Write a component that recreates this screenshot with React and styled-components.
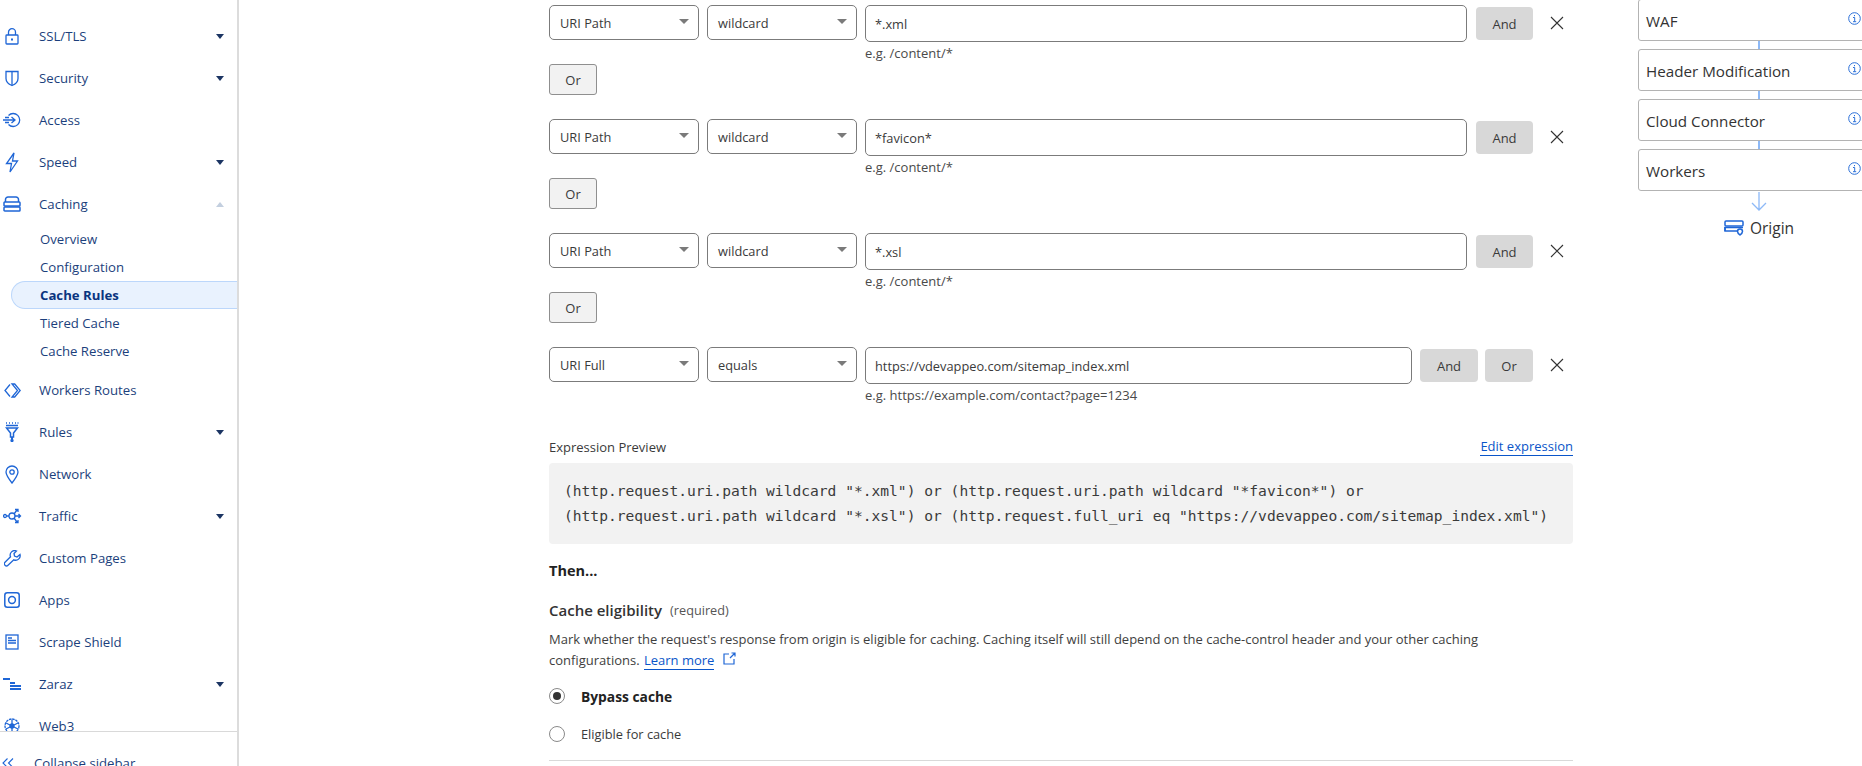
import React from "react";
import styled, { createGlobalStyle } from "styled-components";

const Global = createGlobalStyle`
  html, body { margin: 0; padding: 0; background: #fff; overflow: hidden; }
  body { font-family: "Open Sans", "Noto Sans", "Liberation Sans", sans-serif; color: #313131; }
  * { box-sizing: border-box; }
`;

const Page = styled.div`
  display: flex;
  width: 1862px;
  height: 766px;
  overflow: hidden;
`;

const Sidebar = styled.aside`
  flex: 0 0 239px;
  height: 766px;
  display: flex;
  flex-direction: column;
  border-right: 2px solid #dcdcdc;
  overflow: hidden;
`;

const NavList = styled.nav`
  height: 732px;
  flex: 0 0 732px;
  padding-top: 15px;
  overflow: hidden;
  border-bottom: 1px solid #d9d9d9;
`;

const NavRow = styled.div`
  display: flex;
  align-items: center;
  height: 42px;
  padding: 0 13px 0 2px;
  font-size: 13.2px;
  color: #1c3f7c;
`;

const NavIcon = styled.span`
  flex: 0 0 20px;
  margin-right: 17px;
  display: flex;
  align-items: center;
  justify-content: center;
  color: #1f66d6;
`;

const NavLabel = styled.span`
  flex: 1;
`;

const Caret = styled.span`
  width: 0;
  height: 0;
  border-left: 4.5px solid transparent;
  border-right: 4.5px solid transparent;
  border-top: ${(p) => (p.$up ? "0" : "5px solid #1c3563")};
  border-bottom: ${(p) => (p.$up ? "5px solid #c3cfdf" : "0")};
`;

const SubList = styled.div`
  display: flex;
  flex-direction: column;
  margin-bottom: 4px;
`;

const SubRow = styled.div`
  height: 28px;
  margin-left: ${(p) => (p.$active ? "11px" : "0")};
  padding-left: ${(p) => (p.$active ? "28px" : "40px")};
  display: flex;
  align-items: center;
  font-size: 13.2px;
  font-weight: ${(p) => (p.$active ? 700 : 400)};
  color: ${(p) => (p.$active ? "#0a3580" : "#1c3f7c")};
  background: ${(p) => (p.$active ? "#e9f2fe" : "transparent")};
  border: ${(p) => (p.$active ? "1px solid #bcd7fb" : "0")};
  border-right: 0;
  border-radius: 14px 0 0 14px;
`;

const Collapse = styled.div`
  display: flex;
  align-items: center;
  gap: 20px;
  padding: 22px 0 0 2px;
  font-size: 13.2px;
  color: #1c3f7c;
  white-space: nowrap;
`;

const Main = styled.main`
  flex: 0 0 1024px;
  margin-left: 310px;
  padding-top: 5px;
`;

const RuleRow = styled.div`
  display: flex;
  align-items: flex-start;
`;

const SelectBox = styled.div`
  flex: 0 0 150px;
  height: 35px;
  margin-right: 8px;
  padding: 0 9px 0 10px;
  display: flex;
  align-items: center;
  justify-content: space-between;
  border: 1px solid #7b7b7b;
  border-radius: 5px;
  font-size: 12.8px;
  color: #3a3a3a;
`;

const SelectCaret = styled.span`
  width: 0;
  height: 0;
  margin-bottom: 2px;
  border-left: 5px solid transparent;
  border-right: 5px solid transparent;
  border-top: 5px solid #7a7a7a;
`;

const ValueColumn = styled.div`
  flex: 1;
  min-width: 0;
`;

const ValueField = styled.div`
  height: 37px;
  padding: 0 9px;
  display: flex;
  align-items: center;
  border: 1px solid #7b7b7b;
  border-radius: 5px;
  font-size: 12.8px;
  color: #3a3a3a;
`;

const Hint = styled.div`
  margin-top: 3px;
  height: 17px;
  line-height: 17px;
  font-size: 13px;
  color: #4a4a4a;
`;

const FlatButton = styled.div`
  height: 33px;
  margin: 2px 0 0 ${(p) => p.$gap}px;
  flex: 0 0 ${(p) => p.$width}px;
  display: flex;
  align-items: center;
  justify-content: center;
  background: #d8d8d8;
  border-radius: 4px;
  font-size: 13px;
  color: #3a3a3a;
`;

const RemoveIcon = styled.span`
  flex: 0 0 40px;
  height: 35px;
  display: flex;
  align-items: center;
  justify-content: flex-end;
  padding-right: 9px;
  color: #333;
`;

const OrButton = styled.div`
  width: 48px;
  height: 31px;
  margin: 2px 0 24px;
  display: flex;
  align-items: center;
  justify-content: center;
  background: #f2f2f2;
  border: 1px solid #8f8f8f;
  border-radius: 3px;
  font-size: 13px;
  color: #3a3a3a;
`;

const PreviewHead = styled.div`
  margin: 33px 0 6px;
  display: flex;
  justify-content: space-between;
  align-items: center;
  height: 20px;
`;

const PreviewLabel = styled.span`
  font-size: 13px;
  color: #3a3a3a;
`;

const EditLink = styled.span`
  font-size: 13px;
  line-height: 17px;
  color: #0a55c9;
  border-bottom: 1px solid #0a55c9;
`;

const CodeBox = styled.pre`
  margin: 0;
  height: 81px;
  padding: 15px;
  background: #f2f2f2;
  border-radius: 4px;
  font-family: "DejaVu Sans Mono", "Liberation Mono", monospace;
  font-size: 14.6px;
  line-height: 25px;
  color: #3a3a3a;
`;

const ThenTitle = styled.div`
  margin-top: 16px;
  height: 22px;
  line-height: 22px;
  font-size: 14.5px;
  font-weight: 700;
  color: #222;
`;

const FieldTitle = styled.div`
  margin-top: 18px;
  height: 20px;
  display: flex;
  align-items: center;
  gap: 8px;
  font-size: 15px;
  font-weight: 600;
  color: #333;
`;

const Required = styled.span`
  font-size: 12.7px;
  font-weight: 400;
  color: #555;
`;

const Description = styled.p`
  margin: 9px 0 0;
  font-size: 13px;
  line-height: 21px;
  color: #3e3e3e;
`;

const LearnLink = styled.span`
  color: #0a55c9;
  border-bottom: 1px solid #0a55c9;
  margin: 0 5px 0 1px;
`;

const RadioRow = styled.div`
  display: flex;
  align-items: center;
  height: 38px;
  gap: 16px;
  font-size: ${(p) => (p.$checked ? "13.8px" : "12.8px")};
  font-weight: ${(p) => (p.$checked ? 700 : 400)};
  color: ${(p) => (p.$checked ? "#222" : "#3a3a3a")};
`;

const RadioList = styled.div`
  margin-top: 6px;
`;

const RadioMark = styled.span`
  flex: 0 0 16px;
  height: 16px;
  display: flex;
  align-items: center;
  justify-content: center;
  border: 1px solid #8a8a8a;
  border-radius: 50%;
  &::after {
    content: "";
    width: 8px;
    height: 8px;
    border-radius: 50%;
    background: ${(p) => (p.$checked ? "#333" : "transparent")};
  }
`;

const Divider = styled.div`
  margin-top: 7px;
  border-top: 1px solid #d9d9d9;
`;

const Flow = styled.section`
  flex: 0 0 242px;
  margin-left: 65px;
  margin-top: -1px;
  display: flex;
  flex-direction: column;
  align-items: stretch;
`;

const PhaseBox = styled.div`
  height: 42px;
  padding: 2px 0 0 7px;
  display: flex;
  align-items: center;
  justify-content: space-between;
  border: 1px solid #b3b3b3;
  border-radius: 3px;
  font-size: 15.2px;
  color: #333;
`;

const PhaseInfo = styled.span`
  width: 13px;
  margin: -5px 18px 0 0;
  display: flex;
  color: #2a6fd8;
`;

const Connector = styled.div`
  align-self: center;
  width: 2px;
  height: 8px;
  background: #8db9f7;
`;

const FlowArrow = styled.div`
  align-self: center;
  height: 20px;
  margin-top: 1px;
  display: flex;
  color: #8db9f7;
`;

const Origin = styled.div`
  margin-top: 5px;
  display: flex;
  align-items: center;
  justify-content: center;
  gap: 6px;
  font-size: 15.5px;
  color: #333;
`;

const sw = { fill: "none", stroke: "currentColor", strokeWidth: 1.3 };

const icons = {
  lock: (
    <svg width="14" height="17" viewBox="0 0 14 17" {...sw}>
      <rect x="1" y="7" width="12" height="9" rx="0.8" />
      <path d="M3.500 7V4.200a3.500 3.500 0 0 1 7 0V7" />
      <path d="M7 10.500v2" strokeWidth="2" />
    </svg>
  ),
  shield: (
    <svg width="14" height="17" viewBox="0 0 14 17" {...sw}>
      <path d="M1 1.500h12v7c0 3.500-3 5.800-6 7-3-1.200-6-3.500-6-7z" />
      <path d="M7 1.500v14" />
    </svg>
  ),
  access: (
    <svg width="20" height="16" viewBox="0 0 20 16" {...sw}>
      <path d="M6.500 3.500a6.500 6.500 0 1 1 0 9" />
      <path d="M1 8h12M9.500 5l3.500 3-3.500 3M3 5.500h4M3 10.500h4" />
    </svg>
  ),
  bolt: (
    <svg width="14" height="21" viewBox="0 0 14 21" {...sw}>
      <path d="M9 1 1.500 11.500h5L5 20l7.500-11h-5z" />
    </svg>
  ),
  caching: (
    <svg width="18" height="16" viewBox="0 0 18 16" {...sw} strokeWidth="1.500">
      <path d="M2.500 6V3.500A2.500 2.500 0 0 1 5 1h8a2.500 2.500 0 0 1 2.500 2.500V6" />
      <rect x="1" y="6" width="16" height="4" rx="0.8" />
      <rect x="1" y="11" width="16" height="4" rx="0.8" />
    </svg>
  ),
  routes: (
    <svg width="17" height="15" viewBox="0 0 17 15" {...sw}>
      <path d="M6 1.500 1 7.500l5 6" />
      <path d="M8 1h2.700l5.500 6.500-5.500 6.500H8l5.500-6.500z" />
    </svg>
  ),
  rules: (
    <svg width="14" height="20" viewBox="0 0 14 20" {...sw}>
      <path d="M1 1h1M4 1h1M7 1h1M10 1h1M12.500 1h1" strokeWidth="1.600" />
      <path d="M1 3.500h12M1.500 6h11L8.500 11v4h-3v-4z" strokeWidth="1.500" />
      <path d="M7 15v3" strokeWidth="2" />
      <circle cx="7" cy="18.500" r="1" fill="currentColor" />
    </svg>
  ),
  pin: (
    <svg width="14" height="19" viewBox="0 0 14 19" {...sw}>
      <path d="M7 18C3.500 13.500 1 10 1 7a6 6 0 0 1 12 0c0 3-2.500 6.500-6 11z" />
      <circle cx="7" cy="7" r="2.200" />
    </svg>
  ),
  traffic: (
    <svg width="19" height="16" viewBox="0 0 19 16" {...sw}>
      <circle cx="2" cy="8" r="1.500" />
      <circle cx="9" cy="8" r="3" />
      <path d="M3.500 8H6M11 6l3-4M11 10l3 4M12 8h5M15.500 6l2 2-2 2M12 1.500h3V4M12 14.500h3V12" />
    </svg>
  ),
  wrench: (
    <svg width="17" height="17" viewBox="0 0 17 17" {...sw}>
      <path d="M16 4.500 13 7l-2.500-1L10 3.500 12.500 1A4.500 4.500 0 0 0 6.500 6.800L1 12.300a2.100 2.100 0 0 0 3 3L9.800 9.800A4.500 4.500 0 0 0 16 4.500z" />
    </svg>
  ),
  apps: (
    <svg width="16" height="16" viewBox="0 0 16 16" {...sw} strokeWidth="1.500">
      <rect x="0.800" y="0.800" width="14.400" height="14.400" rx="2.500" />
      <circle cx="8" cy="8" r="3.400" />
    </svg>
  ),
  scrape: (
    <svg width="14" height="16" viewBox="0 0 14 16" {...sw}>
      <rect x="1" y="1" width="12" height="14" />
      <path d="M3 4h4M3 6.500h8M3 9h8" />
    </svg>
  ),
  zaraz: (
    <svg width="19" height="13" viewBox="0 0 19 13" fill="currentColor">
      <rect x="0" y="0" width="7" height="2" />
      <rect x="7" y="4" width="5" height="2" />
      <rect x="7" y="7" width="11" height="2" />
      <rect x="7" y="10" width="11" height="2" />
    </svg>
  ),
  web3: (
    <svg width="16" height="16" viewBox="0 0 16 16" {...sw}>
      <circle cx="8" cy="8" r="7" strokeDasharray="2.500 0.800" />
      <path d="M8 1.500v13M2 5l12 6M14 5 2 11" />
      <circle cx="8" cy="8" r="2" fill="currentColor" />
    </svg>
  ),
};

const navTop = [
  { label: "SSL/TLS", icon: "lock", caret: true },
  { label: "Security", icon: "shield", caret: true },
  { label: "Access", icon: "access" },
  { label: "Speed", icon: "bolt", caret: true },
  { label: "Caching", icon: "caching", caret: "up" },
];

const navSub = ["Overview", "Configuration", "Cache Rules", "Tiered Cache", "Cache Reserve"];

const navBottom = [
  { label: "Workers Routes", icon: "routes" },
  { label: "Rules", icon: "rules", caret: true },
  { label: "Network", icon: "pin" },
  { label: "Traffic", icon: "traffic", caret: true },
  { label: "Custom Pages", icon: "wrench" },
  { label: "Apps", icon: "apps" },
  { label: "Scrape Shield", icon: "scrape" },
  { label: "Zaraz", icon: "zaraz", caret: true },
  { label: "Web3", icon: "web3" },
];

const rules = [
  { field: "URI Path", op: "wildcard", value: "*.xml", hint: "e.g. /content/*" },
  { field: "URI Path", op: "wildcard", value: "*favicon*", hint: "e.g. /content/*" },
  { field: "URI Path", op: "wildcard", value: "*.xsl", hint: "e.g. /content/*" },
  {
    field: "URI Full",
    op: "equals",
    value: "https://vdevappeo.com/sitemap_index.xml",
    hint: "e.g. https://example.com/contact?page=1234",
    last: true,
  },
];

const phases = ["WAF", "Header Modification", "Cloud Connector", "Workers"];

function NavItem({ item }) {
  return (
    <NavRow>
      <NavIcon>{icons[item.icon]}</NavIcon>
      <NavLabel>{item.label}</NavLabel>
      {item.caret && <Caret $up={item.caret === "up"} />}
    </NavRow>
  );
}

function Rule({ rule }) {
  return (
    <>
      <RuleRow>
        <SelectBox>
          {rule.field}
          <SelectCaret />
        </SelectBox>
        <SelectBox>
          {rule.op}
          <SelectCaret />
        </SelectBox>
        <ValueColumn>
          <ValueField>{rule.value}</ValueField>
          <Hint>{rule.hint}</Hint>
        </ValueColumn>
        <FlatButton $width={rule.last ? 58 : 57} $gap={rule.last ? 8 : 9}>
          And
        </FlatButton>
        {rule.last && (
          <FlatButton $width={48} $gap={7}>
            Or
          </FlatButton>
        )}
        <RemoveIcon>
          <svg width="14" height="14" viewBox="0 0 14 14" fill="none" stroke="currentColor" strokeWidth="1.100">
            <path d="M1 1l12 12M13 1 1 13" />
          </svg>
        </RemoveIcon>
      </RuleRow>
      {!rule.last && <OrButton>Or</OrButton>}
    </>
  );
}

export default function App() {
  return (
    <Page>
      <Global />
      <Sidebar>
        <NavList>
          {navTop.map((item) => (
            <NavItem key={item.label} item={item} />
          ))}
          <SubList>
            {navSub.map((s) => (
              <SubRow key={s} $active={s === "Cache Rules"}>
                {s}
              </SubRow>
            ))}
          </SubList>
          {navBottom.map((item) => (
            <NavItem key={item.label} item={item} />
          ))}
        </NavList>
        <Collapse>
          <svg width="12" height="10" viewBox="0 0 12 10" fill="none" stroke="#1f66d6" strokeWidth="1.100">
            <path d="M5.500 0.500 1 5l4.500 4.500M11 0.500 6.500 5 11 9.500" />
          </svg>
          Collapse sidebar
        </Collapse>
      </Sidebar>

      <Main>
        {rules.map((r) => (
          <Rule key={r.value} rule={r} />
        ))}
        <PreviewHead>
          <PreviewLabel>Expression Preview</PreviewLabel>
          <EditLink>Edit expression</EditLink>
        </PreviewHead>
        <CodeBox>
          {`(http.request.uri.path wildcard "*.xml") or (http.request.uri.path wildcard "*favicon*") or
(http.request.uri.path wildcard "*.xsl") or (http.request.full_uri eq "https://vdevappeo.com/sitemap_index.xml")`}
        </CodeBox>
        <ThenTitle>Then...</ThenTitle>
        <FieldTitle>
          Cache eligibility <Required>(required)</Required>
        </FieldTitle>
        <Description>
          Mark whether the request's response from origin is eligible for caching. Caching itself will still depend on
          the cache-control header and your other caching
          <br />
          configurations. <LearnLink>Learn more</LearnLink>{" "}
          <svg width="13" height="13" viewBox="0 0 13 13" fill="none" stroke="#1f66d6" strokeWidth="1.200">
            <path d="M6 2H1v10h10V7M7 6l5-5M8.500 1H12v3.500" />
          </svg>
        </Description>
        <RadioList>
          <RadioRow $checked>
            <RadioMark $checked />
            Bypass cache
          </RadioRow>
          <RadioRow>
            <RadioMark />
            Eligible for cache
          </RadioRow>
        </RadioList>
        <Divider />
      </Main>

      <Flow>
        {phases.map((p, i) => (
          <React.Fragment key={p}>
            {i > 0 && <Connector />}
            <PhaseBox>
              {p}
              <PhaseInfo>
                <svg width="13" height="13" viewBox="0 0 13 13" fill="none" stroke="currentColor" strokeWidth="1">
                  <circle cx="6.500" cy="6.500" r="5.800" />
                  <path d="M5 5.500h1.700v4M5 9.700h3.200M6.500 3v1.200" />
                </svg>
              </PhaseInfo>
            </PhaseBox>
          </React.Fragment>
        ))}
        <FlowArrow>
          <svg width="16" height="20" viewBox="0 0 16 20" fill="none" stroke="currentColor" strokeWidth="1.300">
            <path d="M8 0v18M1 11l7 7 7-7" />
          </svg>
        </FlowArrow>
        <Origin>
          <svg width="20" height="16" viewBox="0 0 20 16" fill="none" stroke="#1f66d6" strokeWidth="1.500">
            <rect x="1" y="1" width="18" height="5" rx="1" />
            <path d="M14 11H1V7.500h18" />
            <path d="M1 7v4" />
            <path d="M16 15c-2-1.500-2.500-2.500-2.500-3.500a2.500 2.500 0 0 1 5 0c0 1-.5 2-2.500 3.500z" />
          </svg>
          Origin
        </Origin>
      </Flow>
    </Page>
  );
}
